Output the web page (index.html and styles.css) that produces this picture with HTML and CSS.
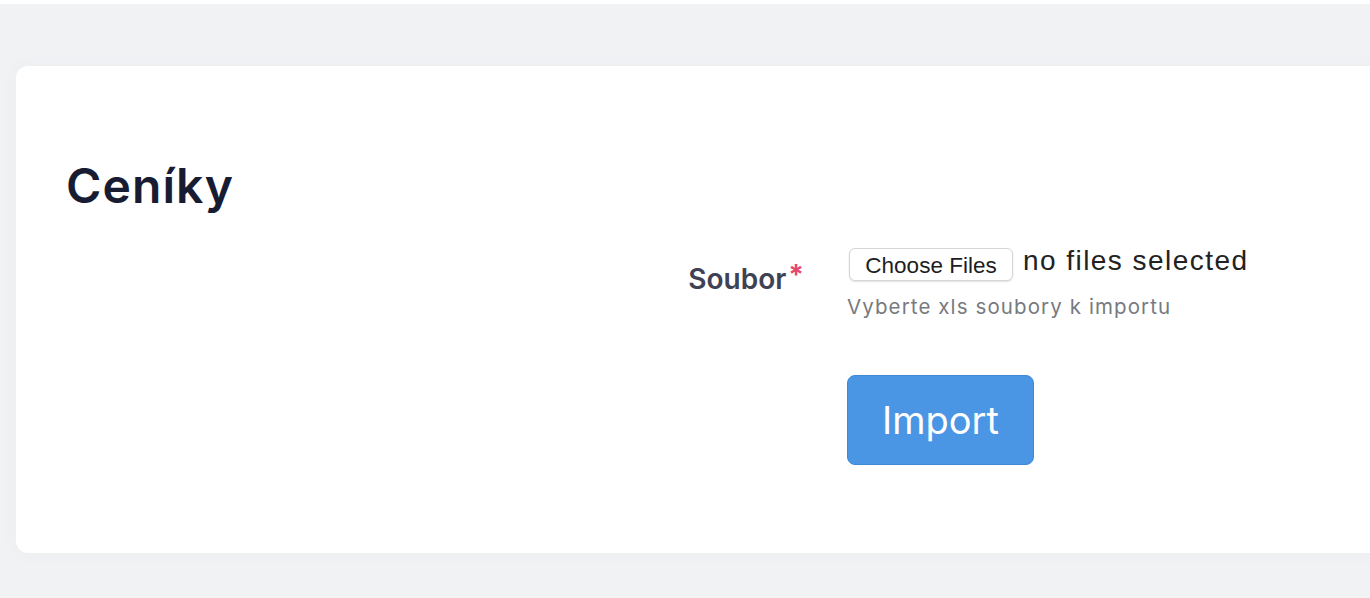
FILE: index.html
```html
<!DOCTYPE html>
<html lang="cs">
<head>
<meta charset="utf-8">
<title>Ceníky</title>
<link rel="stylesheet" href="styles.css">
</head>
<body>
<div class="topbar"></div>
<main class="content">
  <section class="card">
    <h1 class="title">Ceníky</h1>
    <form class="form">
      <div class="row">
        <label class="label">Soubor<span class="req">*</span></label>
        <div class="field">
          <div class="file">
            <span class="file-btn">Choose Files</span>
            <span class="file-text">no files selected</span>
          </div>
          <div class="hint">Vyberte xls soubory k importu</div>
        </div>
      </div>
      <div class="row actions">
        <div></div>
        <div class="field">
          <button type="button" class="btn">Import</button>
        </div>
      </div>
    </form>
  </section>
</main>
</body>
</html>
```
FILE: styles.css
```css
html, body {
  margin: 0;
  padding: 0;
  overflow: hidden;
  height: 100%;
}
body {
  background: #f1f2f4;
  font-family: Inter, "Noto Sans", sans-serif;
}
.topbar {
  height: 4px;
  background: #ffffff;
}
.content {
  padding: 62px 0 0 16px;
}
.card {
  width: 1420px;
  box-sizing: border-box;
  background: #ffffff;
  border-radius: 12px;
  box-shadow: 0 0 20px rgba(76, 87, 125, 0.03);
  padding: 96px 50px 88px 50px;
}
.title {
  margin: 0;
  font-size: 48px;
  line-height: 48px;
  font-weight: 600;
  color: #181c32;
  letter-spacing: 1.1px;
}
.form {
  margin-top: 38px;
}
.row {
  display: grid;
  grid-template-columns: 738px 1fr;
  column-gap: 43px;
}
.label {
  text-align: right;
  padding-top: 7px;
  font-size: 28px;
  line-height: 40px;
  font-weight: 600;
  color: #3f4254;
}
.req {
  color: #e6476d;
  margin-left: 2px;
  font-size: 28px;
  vertical-align: 4px;
  font-weight: 700;
}
.file {
  display: flex;
  align-items: center;
  height: 33px;
}
.file-btn {
  box-sizing: border-box;
  height: 33px;
  width: 164px;
  margin-left: 2px;
  display: flex;
  align-items: center;
  justify-content: center;
  font-family: "Liberation Sans", Arial, sans-serif;
  font-size: 22.5px;
  color: #1d1d1f;
  background: #ffffff;
  border: 1px solid #d6d6d6;
  border-radius: 6px;
  box-shadow: 0 1px 2px rgba(0, 0, 0, 0.12);
  padding-top: 3px;
}
.file-text {
  margin-left: 10px;
  font-family: "Liberation Sans", Arial, sans-serif;
  font-size: 28px;
  letter-spacing: 1.45px;
  color: #222222;
  margin-top: -8px;
}
.hint {
  margin-top: 11px;
  font-size: 20.5px;
  line-height: 30px;
  letter-spacing: 1.1px;
  color: #777a80;
}
.actions {
  margin-top: 53px;
}
.btn {
  width: 187px;
  height: 90px;
  box-sizing: border-box;
  background: #4a96e5;
  border: 1px solid #3e8ad9;
  border-radius: 8px;
  color: #ffffff;
  font-family: Inter, "Noto Sans", sans-serif;
  font-size: 38px;
  font-weight: 400;
  padding: 0;
  cursor: pointer;
}
```
